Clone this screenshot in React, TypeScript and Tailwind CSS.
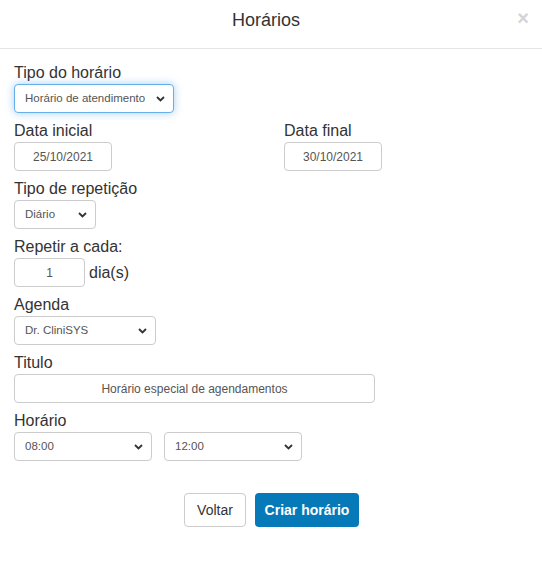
import React from "react";

const Chevron = () => (
  <svg width="9" height="6" viewBox="0 0 9 6" className="shrink-0">
    <path d="M1 1 L4.5 4.5 L8 1" fill="none" stroke="#333" strokeWidth="1.8" />
  </svg>
);

function FakeSelect({ value, width, focused = false }: { value: string; width: string; focused?: boolean }) {
  return (
    <div
      className={`${width} h-[29px] flex items-center justify-between pl-[10px] pr-[8px] rounded-[4px] bg-white text-[11.5px] text-[#555] border ${
        focused ? "border-[#66afe9] shadow-[0_0_8px_rgba(102,175,233,0.6)]" : "border-[#ccc]"
      }`}
    >
      <span className="whitespace-nowrap">{value}</span>
      <Chevron />
    </div>
  );
}

function TextBox({ value, width }: { value: string; width: string }) {
  return (
    <div className={`${width} h-[29px] flex items-center justify-center rounded-[4px] border border-[#ccc] bg-white text-[12px] text-[#555]`}>
      {value}
    </div>
  );
}

function Label({ children }: { children: React.ReactNode }) {
  return <div className="text-[16px] leading-[18px] mb-[2px] text-[#333]">{children}</div>;
}

export default function App() {
  return (
    <div className="w-[542px] h-[577px] bg-white font-['Liberation_Sans',Arial,sans-serif] text-[#333]">
      {/* Header */}
      <div className="relative h-[49px] border-b border-[#e5e5e5] flex items-center justify-center pr-[10px]">
        <h4 className="text-[18px] text-[#333] -mt-[8px]">Horários</h4>
        <span className="absolute right-[13px] top-[3px] text-[20px] font-bold text-[#d4d4d4]">×</span>
      </div>

      {/* Body */}
      <div className="px-[14px] pt-[15px] flex flex-col gap-[9px]">
        <div>
          <Label>Tipo do horário</Label>
          <FakeSelect value="Horário de atendimento" width="w-[160px]" focused />
        </div>

        <div className="grid grid-cols-[270px_1fr]">
          <div>
            <Label>Data inicial</Label>
            <TextBox value="25/10/2021" width="w-[98px]" />
          </div>
          <div>
            <Label>Data final</Label>
            <TextBox value="30/10/2021" width="w-[98px]" />
          </div>
        </div>

        <div>
          <Label>Tipo de repetição</Label>
          <FakeSelect value="Diário" width="w-[82px]" />
        </div>

        <div>
          <Label>Repetir a cada:</Label>
          <div className="flex items-center gap-[4px]">
            <TextBox value="1" width="w-[71px]" />
            <span className="text-[16px]">dia(s)</span>
          </div>
        </div>

        <div>
          <Label>Agenda</Label>
          <FakeSelect value="Dr. CliniSYS" width="w-[142px]" />
        </div>

        <div>
          <Label>Titulo</Label>
          <TextBox value="Horário especial de agendamentos" width="w-[361px]" />
        </div>

        <div>
          <Label>Horário</Label>
          <div className="flex gap-[12px]">
            <FakeSelect value="08:00" width="w-[138px]" />
            <FakeSelect value="12:00" width="w-[138px]" />
          </div>
        </div>

        {/* Footer buttons */}
        <div className="flex justify-center gap-[9px] mt-[23px] pl-[1px]">
          <button className="w-[62px] h-[34px] rounded-[4px] border border-[#ccc] bg-white text-[14px] text-[#333]">
            Voltar
          </button>
          <button className="w-[104px] h-[34px] rounded-[4px] bg-[#0679b9] text-[14px] font-bold text-white">
            Criar horário
          </button>
        </div>
      </div>
    </div>
  );
}
